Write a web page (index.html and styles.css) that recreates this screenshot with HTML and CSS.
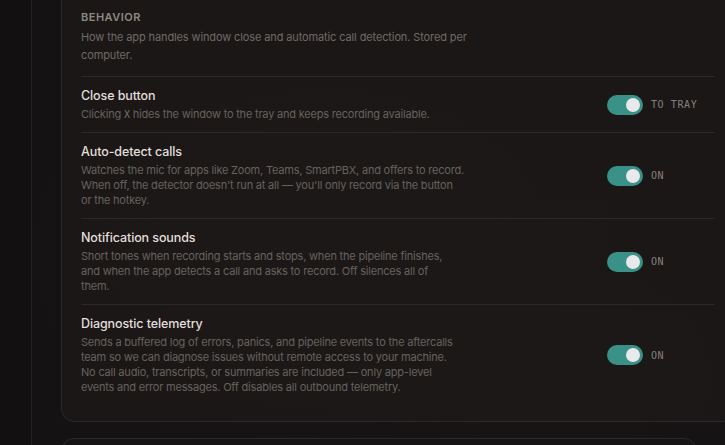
FILE: index.html
```html
<!DOCTYPE html>
<html lang="en">
<head>
  <meta charset="UTF-8" />
  <meta name="viewport" content="width=device-width, initial-scale=1.0" />
  <title>Settings</title>
  <link rel="stylesheet" href="styles.css">
</head>
<body>
  <div class="app">
    <aside class="sidebar"></aside>

    <main class="main">
      <section class="card">
        <h2 class="card-title">Behavior</h2>
        <p class="card-desc">How the app handles window close and automatic call detection. Stored per<br>computer.</p>

        <div class="row">
          <div class="row-text">
            <h3>Close button</h3>
            <p>Clicking <span class="kbd">X</span> hides the window to the tray and keeps recording available.</p>
          </div>
          <div class="control">
            <span class="toggle on"><span class="knob"></span></span>
            <span class="state">TO TRAY</span>
          </div>
        </div>

        <div class="row">
          <div class="row-text">
            <h3>Auto-detect calls</h3>
            <p>Watches the mic for apps like Zoom, Teams, SmartPBX, and offers to record.<br>When off, the detector doesn't run at all — you'll only record via the button<br>or the hotkey.</p>
          </div>
          <div class="control">
            <span class="toggle on"><span class="knob"></span></span>
            <span class="state">ON</span>
          </div>
        </div>

        <div class="row">
          <div class="row-text">
            <h3>Notification sounds</h3>
            <p>Short tones when recording starts and stops, when the pipeline finishes,<br>and when the app detects a call and asks to record. Off silences all of<br>them.</p>
          </div>
          <div class="control">
            <span class="toggle on"><span class="knob"></span></span>
            <span class="state">ON</span>
          </div>
        </div>

        <div class="row">
          <div class="row-text">
            <h3>Diagnostic telemetry</h3>
            <p>Sends a buffered log of errors, panics, and pipeline events to the aftercalls<br>team so we can diagnose issues without remote access to your machine.<br>No call audio, transcripts, or summaries are included — only app-level<br>events and error messages. Off disables all outbound telemetry.</p>
          </div>
          <div class="control">
            <span class="toggle on"><span class="knob"></span></span>
            <span class="state">ON</span>
          </div>
        </div>
      </section>

      <section class="card next"></section>
    </main>
  </div>
</body>
</html>
```

FILE: styles.css
```css
html, body {
  margin: 0;
  height: 100%;
}
body {
  font-family: 'Inter', 'Noto Sans', sans-serif;
  background: #131112;
  color: #e4e0dc;
  overflow: hidden;
}
.app {
  display: flex;
  height: 100%;
  background:
    radial-gradient(ellipse 300px 220px at 330px 250px, rgba(60, 45, 38, 0.18), transparent),
    radial-gradient(ellipse 260px 200px at 560px 380px, rgba(55, 40, 35, 0.14), transparent),
    #141213;
}
.sidebar {
  width: 31px;
  flex: none;
  background: #121011;
  border-right: 1px solid #242121;
}
.main {
  flex: 1;
  padding-left: 29px;
  min-width: 0;
}
.card {
  width: 634px;
  margin-top: -33px;
  padding: 42px 19px 16px 19px;
  background: rgba(28, 25, 24, 0.85);
  border: 1px solid #2c2928;
  border-radius: 13px;
}
.card.next {
  margin-top: 16px;
  height: 60px;
  padding: 0;
  background: #161415;
}
.card-title {
  margin: 0;
  font-size: 11px;
  font-weight: 600;
  letter-spacing: 0.5px;
  text-transform: uppercase;
  color: #8e8882;
  line-height: 14px;
}
.card-desc {
  margin: 4px 0 12px;
  font-size: 11px;
  letter-spacing: -0.12px;
  line-height: 18px;
  color: #6f6a66;
}
.row {
  display: flex;
  align-items: center;
  justify-content: space-between;
  border-top: 1px solid #2b2827;
  padding: 10px 0 10px;
}
.row-text h3 {
  margin: 0;
  font-size: 12.5px;
  font-weight: 500;
  letter-spacing: -0.1px;
  line-height: 18px;
  color: #e2deda;
}
.row-text p {
  margin: 2px 0 0;
  white-space: nowrap;
  font-size: 11px;
  letter-spacing: -0.2px;
  line-height: 15px;
  color: #67625e;
}
.kbd {
  font-family: 'DejaVu Sans Mono', monospace;
  font-size: 10px;
  letter-spacing: 0;
  color: #77726e;
}
.control {
  display: flex;
  align-items: center;
  gap: 8px;
  flex: none;
}
.toggle {
  width: 36px;
  height: 20px;
  border-radius: 10px;
  background: #3a9187;
  display: flex;
  align-items: center;
  justify-content: flex-end;
  padding: 0 3px;
  box-sizing: border-box;
}
.knob {
  width: 14px;
  height: 14px;
  border-radius: 50%;
  background: #e9e8ea;
}
.state {
  width: 64px;
  font-family: 'DejaVu Sans Mono', monospace;
  font-size: 10px;
  letter-spacing: 0.6px;
  color: #86817c;
}
```
